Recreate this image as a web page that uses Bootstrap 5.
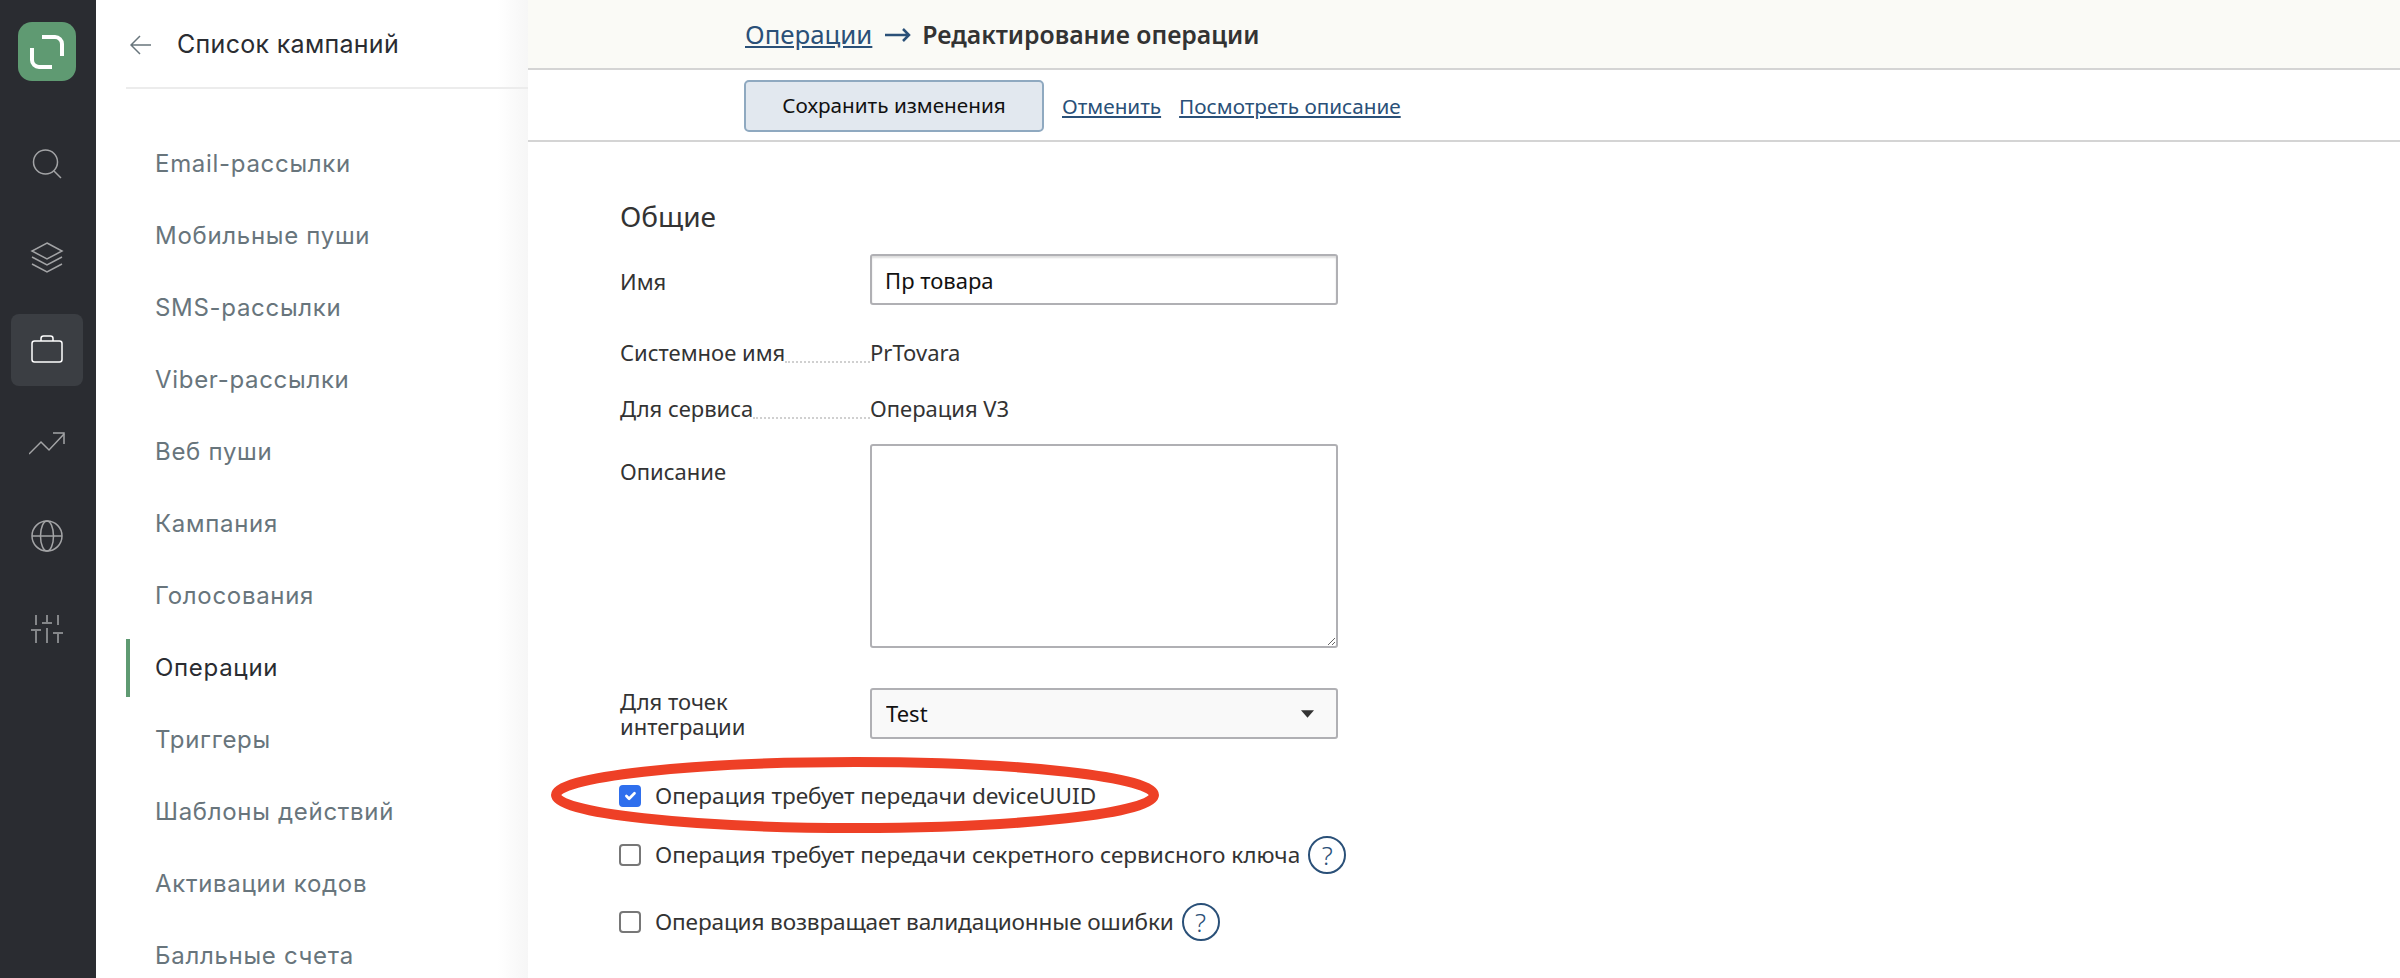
<!DOCTYPE html>
<html lang="ru">
<head>
    <meta charset="UTF-8">
    <meta name="viewport" content="width=device-width, initial-scale=1.0">
    <title>Редактирование операции</title>
    <link rel="stylesheet" href="https://cdn.jsdelivr.net/npm/bootstrap@5.3.0/dist/css/bootstrap.min.css">
    <style>
        html, body { height: 100%; overflow: hidden; }
        body { font-family: "Noto Sans", "Open Sans", sans-serif; color: #333; }
        .app-shell { height: 978px; }

        /* dark icon rail */
        .rail { width: 96px; background: #2a2c31; padding: 22px 3px 0 0; }
        .rail-logo { width: 58px; height: 59px; border-radius: 14px; background: #5f9a72; margin-bottom: 47px; }
        .rail-item { width: 72px; height: 72px; border-radius: 8px; margin-bottom: 21px; color: #a3a4a6; }
        .rail-item.is-active { background: #3b3e43; color: #fff; }
        .rail-item svg { width: 36px; height: 36px; fill: none; stroke: currentColor; stroke-width: 1.5; }

        /* campaign list panel */
        .side-panel { width: 432px; padding-left: 30px; background: linear-gradient(to right, #fff 93%, #f6f6f6 100%); font-family: Inter, sans-serif; }
        .side-head { height: 89px; border-bottom: 2px solid #ececec; font-size: 25px; letter-spacing: .3px; color: #2a2c31; gap: 25px; padding: 3px 0 0 4px; }
        .side-list { padding-top: 39px; }
        .side-link { display: block; height: 72px; line-height: 72px; padding-left: 29px; font-size: 24px; letter-spacing: .7px; color: #68757c; text-decoration: none; }
        .side-link.is-current { color: #2a2c31; background: linear-gradient(#5f9a72, #5f9a72) left center / 4px 58px no-repeat; }

        /* top bars */
        .page-head { height: 70px; background: #fafaf6; border-bottom: 2px solid #d4d4d4; padding: 1px 0 0 217px; font-size: 25.800px; }
        .page-head strong { font-size: 24.800px; font-weight: 600; }
        .page-head a, .tool-bar a { color: #2a5078; }
        .page-arrow { margin: 0 11px 0 13px; }
        .tool-bar { height: 72px; border-bottom: 2px solid #d4d4d4; padding: 2px 0 0 216px; gap: 18px; font-size: 20.700px; }
        .tool-bar a { padding-top: 2px; }
        .btn-save { width: 300px; height: 52px; background: #e2e8ef; border: 2px solid #8fa9c0; color: #111; font-size: 20.700px; border-radius: 5px; padding: 0; }

        /* form */
        .edit-form { padding: 53px 0 0 92px; width: 900px; font-size: 22px; }
        .form-title { font-size: 28px; font-weight: 400; color: #333; margin-bottom: 17px; line-height: 42px; }
        .field-label { width: 250px; flex-shrink: 0; padding-right: 70px; line-height: 25px; }
        .field-box { width: 468px; }
        .edit-form .form-control, .edit-form .form-select { border: 2px solid #b0b0b4; border-radius: 3px; color: #111; box-shadow: none; }
        .edit-form input.form-control { height: 51px; padding: 0 13px; font-size: 22px; box-shadow: inset 0 2px 2px #ddd; }
        .edit-form textarea.form-control { height: 204px; }
        .edit-form .form-select { height: 51px; padding: 0 14px; font-size: 22px; background-color: #f9f9f9; background-image: url("data:image/svg+xml,%3csvg xmlns='http://www.w3.org/2000/svg' viewBox='0 0 14 8'%3e%3cpath fill='%23333' d='M0 0h14L7 8z'/%3e%3c/svg%3e"); background-size: 13px 8px; background-position: right 22px center; }
        .name-row { margin-bottom: 18px; }
        .name-row label { padding-top: 3px; }
        .leader-row { height: 56px; padding-top: 3px; }
        .leader-label { width: 250px; flex-shrink: 0; }
        .leader-line { flex: 1; border-bottom: 2px dotted #d0d0d0; align-self: flex-end; margin-bottom: 6px; }
        .desc-row { margin-top: 9px; margin-bottom: 40px; }
        .desc-row label { padding-top: 15px; }
        .points-row { margin-bottom: 42px; }
        .check-row { gap: 14px; line-height: 30px; font-size: 22.600px; margin-left: -1px; }
        .check-row .form-check-input { width: 22px; height: 22px; margin: 0; flex-shrink: 0; border: 2px solid #777; border-radius: 4px; }
        .check-row .form-check-input:checked { border-color: #2f6fed; background-color: #2f6fed; }
        .check-first { margin-bottom: 25px; }
        .check-second { margin-bottom: 29px; }
        .check-third label { letter-spacing: -.15px; }
        .help-mark { width: 38px; height: 38px; border: 2px solid #2a5078; border-radius: 50%; color: #2a5078; font-size: 26px; font-weight: 300; margin-left: -6px; }
        .form-zone { position: relative; }
        .red-ring { position: absolute; left: -70px; top: 562px; width: 610px; height: 76px; }
    </style>
</head>
<body>
    <div class="app-shell d-flex">
        <nav class="rail d-flex flex-column align-items-center flex-shrink-0">
            <div class="rail-logo d-flex align-items-center justify-content-center">
                <svg width="36" height="36" viewBox="0 0 36 36" fill="none" stroke="#fff" stroke-width="4">
                    <path d="M13 3h13a7 7 0 0 1 7 7v12"/>
                    <path d="M3 14v12a7 7 0 0 0 7 7h13"/>
                </svg>
            </div>
            <a class="rail-item d-flex align-items-center justify-content-center">
                <svg viewBox="0 0 36 36"><circle cx="16.500" cy="16" r="12"/><path d="M25 25l7 7"/></svg>
            </a>
            <a class="rail-item d-flex align-items-center justify-content-center">
                <svg viewBox="0 0 36 36"><path d="M18 4L33 12 18 20 3 12z"/><path d="M3 18l15 8 15-8"/><path d="M3 25l15 8 15-8"/></svg>
            </a>
            <a class="rail-item is-active d-flex align-items-center justify-content-center">
                <svg viewBox="0 0 36 36"><rect x="3" y="9" width="30" height="21" rx="2.500"/><path d="M12 9V6.500a2.500 2.500 0 0 1 2.500-2.500h7a2.500 2.500 0 0 1 2.500 2.500V9"/></svg>
            </a>
            <a class="rail-item d-flex align-items-center justify-content-center">
                <svg viewBox="0 0 36 36"><path d="M0 29l12-12 8 8L35 9"/><path d="M24 8h11v11"/></svg>
            </a>
            <a class="rail-item d-flex align-items-center justify-content-center">
                <svg viewBox="0 0 36 36"><circle cx="18" cy="18" r="15"/><ellipse cx="18" cy="18" rx="6.500" ry="15"/><path d="M3 18h30"/></svg>
            </a>
            <a class="rail-item d-flex align-items-center justify-content-center">
                <svg viewBox="0 0 36 36"><path d="M7 4v10M18 4v7M29 4v10M7 20v12M18 17v15M29 23v9"/><path d="M2 19h10M13 12h10M24 22h10"/></svg>
            </a>
        </nav>

        <aside class="side-panel flex-shrink-0">
            <div class="side-head d-flex align-items-center">
                <svg width="22" height="20" viewBox="0 0 22 20" fill="none" stroke="#68757c" stroke-width="1.500"><path d="M21 10H1M10 1l-9 9 9 9"/></svg>
                <span>Список кампаний</span>
            </div>
            <div class="side-list">
                <a class="side-link" href="#">Email-рассылки</a>
                <a class="side-link" href="#">Мобильные пуши</a>
                <a class="side-link" href="#">SMS-рассылки</a>
                <a class="side-link" href="#">Viber-рассылки</a>
                <a class="side-link" href="#">Веб пуши</a>
                <a class="side-link" href="#">Кампания</a>
                <a class="side-link" href="#">Голосования</a>
                <a class="side-link is-current" href="#">Операции</a>
                <a class="side-link" href="#">Триггеры</a>
                <a class="side-link" href="#">Шаблоны действий</a>
                <a class="side-link" href="#">Активации кодов</a>
                <a class="side-link" href="#">Балльные счета</a>
            </div>
        </aside>

        <main class="flex-grow-1">
            <div class="page-head d-flex align-items-center">
                <a href="#">Операции</a>
                <svg class="page-arrow" width="26" height="16" viewBox="0 0 26 16" fill="none" stroke="#2a5078" stroke-width="2.500"><path d="M0 8h24M18 2l6 6-6 6"/></svg>
                <strong>Редактирование операции</strong>
            </div>
            <div class="tool-bar d-flex align-items-center">
                <button type="button" class="btn btn-save">Сохранить изменения</button>
                <a href="#">Отменить</a>
                <a href="#">Посмотреть описание</a>
            </div>
            <form class="edit-form">
                <div class="form-zone">
                    <h2 class="form-title">Общие</h2>
                    <div class="name-row d-flex align-items-center">
                        <label class="field-label" for="opName">Имя</label>
                        <div class="field-box"><input id="opName" class="form-control" type="text" value="Пр товара"></div>
                    </div>
                    <div class="leader-row d-flex align-items-center">
                        <div class="leader-label d-flex"><span>Системное имя</span><span class="leader-line"></span></div>
                        <span>PrTovara</span>
                    </div>
                    <div class="leader-row d-flex align-items-center">
                        <div class="leader-label d-flex"><span>Для сервиса</span><span class="leader-line"></span></div>
                        <span>Операция V3</span>
                    </div>
                    <div class="desc-row d-flex align-items-start">
                        <label class="field-label" for="opDesc">Описание</label>
                        <div class="field-box"><textarea id="opDesc" class="form-control"></textarea></div>
                    </div>
                    <div class="points-row d-flex align-items-center">
                        <label class="field-label" for="opPoints">Для точек интеграции</label>
                        <div class="field-box"><select id="opPoints" class="form-select"><option>Test</option></select></div>
                    </div>
                    <div class="check-row check-first d-flex align-items-center">
                        <input class="form-check-input" type="checkbox" id="chkUuid" checked>
                        <label for="chkUuid">Операция требует передачи deviceUUID</label>
                    </div>
                    <div class="check-row check-second d-flex align-items-center">
                        <input class="form-check-input" type="checkbox" id="chkKey">
                        <label for="chkKey">Операция требует передачи секретного сервисного ключа</label>
                        <span class="help-mark d-inline-flex align-items-center justify-content-center">?</span>
                    </div>
                    <div class="check-row check-third d-flex align-items-center">
                        <input class="form-check-input" type="checkbox" id="chkErr">
                        <label for="chkErr">Операция возвращает валидационные ошибки</label>
                        <span class="help-mark d-inline-flex align-items-center justify-content-center">?</span>
                    </div>
                    <svg class="red-ring" viewBox="0 0 610 76" fill="none"><ellipse cx="305" cy="38" rx="299" ry="33" stroke="#ee4026" stroke-width="10"/></svg>
                </div>
            </form>
        </main>
    </div>
    <script src="https://cdn.jsdelivr.net/npm/bootstrap@5.3.0/dist/js/bootstrap.bundle.min.js"></script>
</body>
</html>
